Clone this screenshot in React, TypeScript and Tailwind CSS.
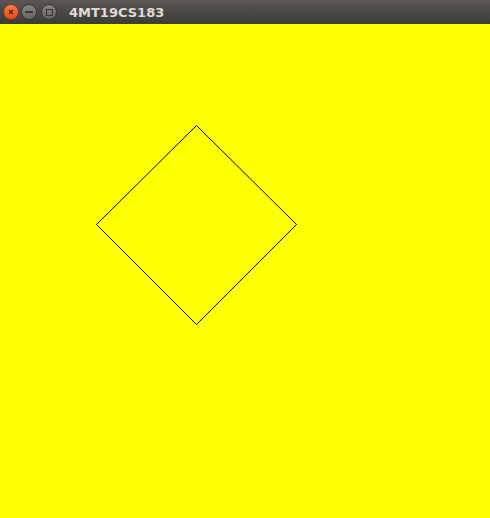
import React from 'react';

export default function App() {
  return (
    <div className="w-[490px] h-[518px] flex flex-col bg-[#ffff00] overflow-hidden">
      {/* title bar */}
      <div className="h-[24px] shrink-0 flex items-center bg-gradient-to-b from-[#5a5752] to-[#3c3b37] pl-[3px]">
        <div className="flex items-center gap-[2px]">
          <div className="w-[16px] h-[16px] rounded-full bg-gradient-to-b from-[#f47a4f] to-[#df4a16] border border-[#8a3a1a] flex items-center justify-center">
            <svg width="6" height="6" viewBox="0 0 6 6">
              <path d="M1 1L5 5M5 1L1 5" stroke="#5a2208" strokeWidth="1.3" />
            </svg>
          </div>
          <div className="w-[16px] h-[16px] rounded-full bg-gradient-to-b from-[#8a8780] to-[#66645e] border border-[#3a3935] flex items-center justify-center">
            <div className="w-[8px] h-[1.5px] bg-[#3a3935]" />
          </div>
          <div className="ml-[2px] w-[16px] h-[16px] rounded-full bg-gradient-to-b from-[#8a8780] to-[#66645e] border border-[#3a3935] flex items-center justify-center">
            <div className="w-[7px] h-[7px] border border-[#3a3935]" />
          </div>
        </div>
        <span className="ml-[12px] font-['DejaVu_Sans',sans-serif] font-bold text-[13px] text-[#dfdbd2] leading-none">
          4MT19CS183
        </span>
      </div>
      {/* canvas */}
      <div className="flex-1">
        <svg width="490" height="494" viewBox="0 0 490 494" className="block">
          <polygon points="196.5,101.5 296.5,200.5 196.5,300.5 96.5,200.5" fill="none" stroke="#000" strokeWidth="1" />
        </svg>
      </div>
    </div>
  );
}
